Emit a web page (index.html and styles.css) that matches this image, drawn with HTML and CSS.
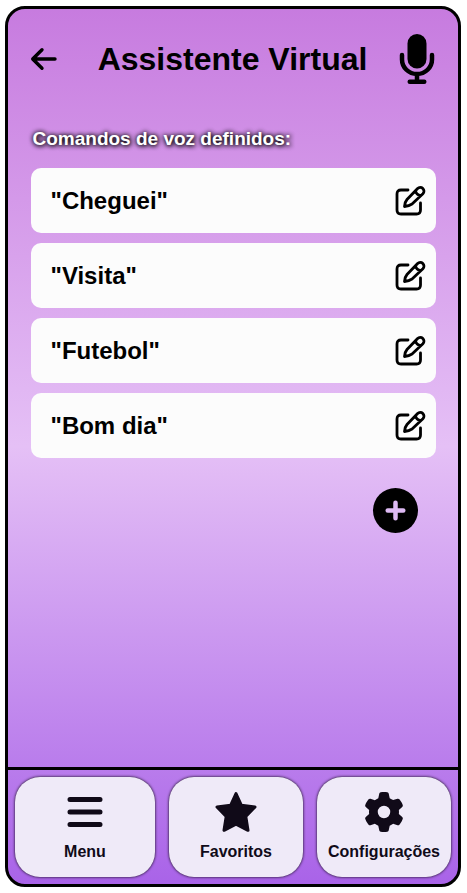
FILE: index.html
```html
<!DOCTYPE html>
<html lang="pt-BR">
<head>
<meta charset="utf-8">
<meta name="viewport" content="width=device-width, initial-scale=1">
<title>Assistente Virtual</title>
<link rel="stylesheet" href="styles.css">
</head>
<body>
<div class="app">
  <header class="header">
    <a class="back" href="#" aria-label="Voltar">
      <svg width="28" height="24" viewBox="0 0 28 24" fill="none" stroke="currentColor" stroke-width="3.4" stroke-linecap="round" stroke-linejoin="round"><path d="M25 12H3M12 2.700 2.700 12l9.300 9.300"/></svg>
    </a>
    <h1 class="title">Assistente Virtual</h1>
    <button class="mic" type="button" aria-label="Falar">
      <svg width="36" height="50" viewBox="0 0 36 50"><rect x="8.500" y="0" width="19" height="34.500" rx="9.500" fill="currentColor"/><path d="M3 21v4.500a15 14.500 0 0 0 30 0V21M18 40.500V47" fill="none" stroke="currentColor" stroke-width="4.500" stroke-linecap="round"/><rect x="8.500" y="45.500" width="19" height="4.500" rx="2.200" fill="currentColor"/></svg>
    </button>
  </header>
  <main class="content">
    <h2 class="subtitle">Comandos de voz definidos:</h2>
    <ul class="commands">
      <li class="command"><span>"Cheguei"</span><button class="edit" type="button" aria-label="Editar Cheguei"><svg class="edit-icon" viewBox="0 0 32 32"><use href="#edit"/></svg></button></li>
      <li class="command"><span>"Visita"</span><button class="edit" type="button" aria-label="Editar Visita"><svg class="edit-icon" viewBox="0 0 32 32"><use href="#edit"/></svg></button></li>
      <li class="command"><span>"Futebol"</span><button class="edit" type="button" aria-label="Editar Futebol"><svg class="edit-icon" viewBox="0 0 32 32"><use href="#edit"/></svg></button></li>
      <li class="command"><span>"Bom dia"</span><button class="edit" type="button" aria-label="Editar Bom dia"><svg class="edit-icon" viewBox="0 0 32 32"><use href="#edit"/></svg></button></li>
    </ul>
    <button class="add" type="button" aria-label="Adicionar comando">
      <svg width="21" height="21" viewBox="0 0 21 21" fill="none" stroke="currentColor" stroke-width="4.500" stroke-linecap="round"><path d="M10.500 2.700v15.600M2.700 10.500h15.600"/></svg>
    </button>
  </main>
  <nav class="nav">
    <button class="tab" type="button">
      <svg class="tab-icon" viewBox="0 0 42 42" fill="none" stroke="currentColor" stroke-width="5" stroke-linecap="round"><path d="M6 8.500h30M6 21h30M6 33.500h30"/></svg>
      Menu
    </button>
    <button class="tab" type="button">
      <svg class="tab-icon" viewBox="0 0 42 42" fill="currentColor" stroke="currentColor" stroke-width="3" stroke-linejoin="round"><path d="M21 2.500 26.400 14.300 40 16 30.800 25.500 33 39.300 21 33.200 9 39.300 11.200 25.500 2 16 15.600 14.300Z"/></svg>
      Favoritos
    </button>
    <button class="tab" type="button">
      <svg class="tab-icon" viewBox="-13 -13 538 538"><path fill="currentColor" d="M495.900 166.600c3.200 8.700.5 18.400-6.400 24.600l-43.300 39.400c1.100 8.300 1.700 16.800 1.700 25.400s-.6 17.100-1.700 25.400l43.300 39.400c6.900 6.200 9.600 15.900 6.400 24.600-4.400 11.900-9.700 23.300-15.800 34.300l-4.700 8.100c-6.600 11-14 21.400-22.100 31.200-5.900 7.200-15.700 9.600-24.500 6.800l-55.700-17.700c-13.400 10.300-28.200 18.900-44 25.400l-12.500 57.100c-2 9.100-9 16.300-18.200 17.800-13.800 2.300-28 3.500-42.500 3.500s-28.700-1.200-42.500-3.500c-9.200-1.500-16.200-8.700-18.200-17.800l-12.500-57.100c-15.800-6.500-30.600-15.100-44-25.400l-55.600 17.800c-8.800 2.800-18.600.3-24.500-6.800-8.100-9.800-15.500-20.200-22.100-31.200l-4.700-8.100c-6.100-11-11.400-22.400-15.800-34.300-3.200-8.700-.5-18.400 6.400-24.600l43.300-39.400C64.600 273.100 64 264.600 64 256s.6-17.100 1.700-25.400l-43.300-39.400c-6.900-6.200-9.600-15.900-6.400-24.600 4.400-11.900 9.700-23.300 15.800-34.300l4.700-8.100c6.600-11 14-21.400 22.100-31.200 5.900-7.200 15.700-9.600 24.500-6.800l55.700 17.700c13.400-10.300 28.200-18.900 44-25.400l12.500-57.100c2-9.100 9-16.300 18.200-17.800C227.300 1.200 241.500 0 256 0s28.700 1.200 42.500 3.500c9.200 1.500 16.200 8.700 18.200 17.800l12.500 57.100c15.800 6.500 30.600 15.100 44 25.400l55.700-17.700c8.800-2.800 18.600-.3 24.500 6.800 8.100 9.800 15.500 20.200 22.100 31.200l4.700 8.100c6.100 11 11.400 22.400 15.800 34.300zM256 336a80 80 0 1 0 0-160 80 80 0 1 0 0 160z"/></svg>
      Configurações
    </button>
  </nav>
</div>
<svg class="symbols" aria-hidden="true">
  <symbol id="edit" viewBox="0 0 32 32">
    <g fill="none" stroke="currentColor" stroke-width="2.800" stroke-linecap="round" stroke-linejoin="round">
      <path d="M14 5H7Q3 5 3 9v16q0 4 4 4h15.500q4 0 4-4V18"/>
      <path d="M10.500 21.500q.3-4.500 2.500-7L23.600 3.500a3.700 3.700 0 0 1 5.300 5.200L17.800 19.200q-2.500 2-7.300 2.300ZM21.500 5.700q.8 4 5 5"/>
    </g>
  </symbol>
</svg>
</body>
</html>
```
FILE: styles.css
```css
* {
  box-sizing: border-box;
}

body {
  margin: 6px 6px 6px 5px;
  background: #fff;
  color: #000;
  font-family: "Liberation Sans", Arial, sans-serif;
  font-weight: bold;
}

button {
  padding: 0;
  border: 0;
  background: none;
  color: inherit;
  font: inherit;
  cursor: pointer;
}

svg {
  display: block;
}

.app {
  display: flex;
  flex-direction: column;
  min-height: calc(100vh - 12px);
  overflow: hidden;
  border: 3px solid #000;
  border-radius: 20px;
  background: linear-gradient(#c77bdf, #e5c0f6 50%, #a963e8);
}

.header {
  display: flex;
  align-items: center;
  justify-content: space-between;
  padding: 25px 23px 0 22px;
}

.back {
  color: inherit;
}

.title {
  margin: 0 0 0 8px;
  font-size: 32px;
  line-height: 36px;
}

.content {
  display: flex;
  flex: 1;
  flex-direction: column;
  padding: 0 5%;
}

.subtitle {
  margin: 44px 0 18px 2px;
  color: #fff;
  font-size: 19px;
  line-height: 22px;
  text-shadow: 0 0 5px #000, 1px 1px 5px #000;
}

.commands {
  display: grid;
  gap: 10px;
  margin: 0;
  padding: 0;
  list-style: none;
}

.command {
  display: flex;
  align-items: center;
  justify-content: space-between;
  height: 65px;
  padding: 0 10px 0 20px;
  border-radius: 10px;
  background: #fcfcfc;
  font-size: 24px;
}

.edit-icon {
  width: 32px;
  height: 32px;
}

.add {
  display: grid;
  place-items: center;
  align-self: flex-end;
  width: 45px;
  height: 45px;
  margin: 30px 18px;
  border-radius: 50%;
  background: #000;
  color: #debaf4;
}

.nav {
  display: grid;
  grid-template-columns: 70fr 67fr 67fr;
  gap: 14px;
  padding: 7px;
  border-top: 3px solid #000;
}

.tab {
  display: flex;
  flex-direction: column;
  align-items: center;
  gap: 9px;
  height: 100px;
  padding-top: 14px;
  border-radius: 25px;
  background: #efeaf8;
  box-shadow: 0 0 3px #000;
  color: #100a18;
  font-size: 16px;
  line-height: 20px;
}

.tab-icon {
  width: 42px;
  height: 42px;
}

.symbols {
  position: absolute;
  width: 0;
  height: 0;
}
```
